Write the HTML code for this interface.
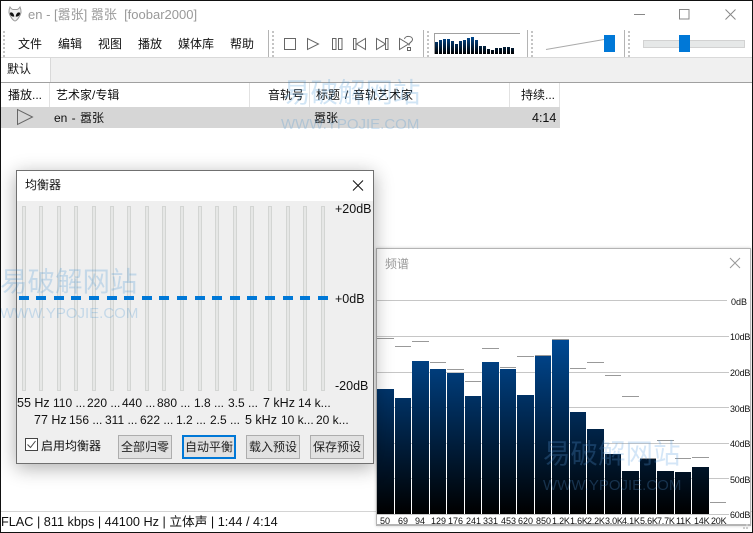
<!DOCTYPE html>
<html><head><meta charset="utf-8">
<style>
html,body{margin:0;padding:0;width:753px;height:533px;overflow:hidden;background:#fff}
body{position:relative;font-family:"Liberation Sans","Noto Sans CJK SC",sans-serif;font-size:12px;color:#111}
.t{position:absolute;white-space:pre;line-height:14px;height:14px}
svg{position:absolute;left:0;top:0;overflow:visible}
.b{position:absolute;box-sizing:border-box;background:#e1e1e1;border:1px solid #adadad;width:54px;height:24px;top:435px;text-align:center;line-height:22px;font-size:12px;color:#222}
.win{position:absolute;left:0;top:0;width:753px;height:533px}
.wm{position:absolute;white-space:pre;color:rgba(40,130,210,.21);line-height:1}
.big{font-size:27.500px}
.www{font-size:15px}
.db{letter-spacing:-.2px}
</style></head><body>

<!-- main window -->
<div class="win" style="z-index:0">
<svg width="753" height="533">
<rect x="1" y="58" width="751" height="25" fill="#f0f0f0"/>
<rect x="1" y="57" width="751" height="1" fill="#d9d9d9"/>
<rect x="1" y="82" width="751" height="1" fill="#a0a0a0"/>
<rect x="1" y="58" width="50" height="24" fill="#fff"/>
<rect x="50" y="58" width="1" height="24" fill="#d9d9d9"/>
<rect x="1" y="107" width="559" height="21" fill="#d6d6d6"/>
<g fill="#e2e2e2"><rect x="49" y="83" width="1" height="24"/><rect x="249" y="83" width="1" height="24"/><rect x="309" y="83" width="1" height="24"/><rect x="509" y="83" width="1" height="24"/><rect x="559" y="83" width="1" height="24"/></g>
<path d="M17.500 109.500V124.500L32.500 117Z" fill="none" stroke="#666"/>
<!-- grippers -->
<g fill="#c4c4c4">
<path d="M3 31h2v2H3zM3 35h2v2H3zM3 39h2v2H3zM3 43h2v2H3zM3 47h2v2H3zM3 51h2v2H3zM3 55h2v2H3z"/>
<path d="M272 31h2v2h-2zM272 35h2v2h-2zM272 39h2v2h-2zM272 43h2v2h-2zM272 47h2v2h-2zM272 51h2v2h-2zM272 55h2v2h-2z"/>
<path d="M427 31h2v2h-2zM427 35h2v2h-2zM427 39h2v2h-2zM427 43h2v2h-2zM427 47h2v2h-2zM427 51h2v2h-2zM427 55h2v2h-2z"/>
<path d="M531 31h2v2h-2zM531 35h2v2h-2zM531 39h2v2h-2zM531 43h2v2h-2zM531 47h2v2h-2zM531 51h2v2h-2zM531 55h2v2h-2z"/>
<path d="M628 31h2v2h-2zM628 35h2v2h-2zM628 39h2v2h-2zM628 43h2v2h-2zM628 47h2v2h-2zM628 51h2v2h-2zM628 55h2v2h-2z"/>
</g>
<g fill="#b4b4b4"><rect x="268" y="30" width="1" height="27"/><rect x="423" y="30" width="1" height="27"/><rect x="527" y="30" width="1" height="27"/><rect x="624" y="30" width="1" height="27"/></g>
<!-- alien icon -->
<path d="M10 7C11 8.500 12 9.500 13 9.500H17C18 9.500 19 8.500 20 7C21.500 10.500 21.500 14 19 17C18 19 16 21 15 21C14 21 12 19 11 17C8.500 14 8.500 10.500 10 7Z" fill="#eee" stroke="#999"/>
<path d="M9.800 13C11.500 11.500 13.800 13 14.300 16.500C12 17 10 15.500 9.800 13ZM20.200 13C18.500 11.500 16.200 13 15.700 16.500C18 17 20 15.500 20.200 13Z" fill="#111"/>
<!-- window controls -->
<rect x="634" y="14" width="11" height="1" fill="#888"/>
<rect x="679.500" y="9.500" width="9.500" height="9.500" fill="none" stroke="#888"/>
<path d="M725.500 9.500L735.500 19.500M735.500 9.500L725.500 19.500" stroke="#888" fill="none"/>
<!-- transport -->
<g fill="none" stroke="#666">
<rect x="284.500" y="38.500" width="11" height="11"/>
<path d="M307.500 38.500V49.500L318.500 44Z"/>
<rect x="332.500" y="38.500" width="3.500" height="11"/><rect x="338.500" y="38.500" width="3.500" height="11"/>
<rect x="353.500" y="38.500" width="2.500" height="11"/><path d="M365.500 38.500V49.500L356.500 44Z"/>
<rect x="385.500" y="38.500" width="2.500" height="11"/><path d="M376.500 38.500V49.500L385.500 44Z"/>
<path d="M399.500 38.500V49.500L408.500 44Z"/>
<path d="M404.500 39C405 35.500 412.500 35.500 412.500 39.500C412.500 42 409 42 409 45.500"/>
<rect x="407.500" y="47.500" width="3" height="3"/>
</g>
<!-- mini visualizer -->
<path d="M434.500 54V33.500H520" fill="none" stroke="#a0a0a0"/>
<defs>
<linearGradient id="mg" gradientUnits="userSpaceOnUse" x1="0" y1="37" x2="0" y2="54"><stop offset="0" stop-color="#00488f"/><stop offset="1" stop-color="#000"/></linearGradient>
</defs>
<g fill="url(#mg)">
<rect x="435" y="42" width="3" height="12"/><rect x="439" y="40" width="3" height="14"/><rect x="443" y="39" width="3" height="15"/><rect x="447" y="39" width="3" height="15"/><rect x="451" y="41" width="3" height="13"/><rect x="455" y="44" width="3" height="10"/><rect x="459" y="41" width="3" height="13"/><rect x="463" y="40" width="3" height="14"/><rect x="467" y="38" width="3" height="16"/><rect x="471" y="37" width="3" height="17"/><rect x="475" y="40" width="3" height="14"/><rect x="479" y="46" width="3" height="8"/><rect x="483" y="46" width="3" height="8"/><rect x="487" y="49" width="3" height="5"/><rect x="491" y="50" width="3" height="4"/><rect x="495" y="48" width="3" height="6"/><rect x="499" y="48" width="3" height="6"/><rect x="503" y="47" width="3" height="7"/><rect x="507" y="47" width="3" height="7"/><rect x="511" y="48" width="3" height="6"/>
</g>
<!-- volume -->
<path d="M546 49.500L604 39.500" stroke="#aaa" fill="none"/>
<rect x="604" y="35" width="11" height="17" fill="#0078d7"/>
<!-- seek -->
<rect x="643.500" y="40.500" width="101" height="7" fill="#e6e8e8" stroke="#d2d2d2"/>
<rect x="679" y="35" width="11" height="17" fill="#0078d7"/>
<!-- status -->
<rect x="1" y="511" width="751" height="1" fill="#d4d4d4"/>
</svg>
<div class="t" style="left:28px;top:8px;font-size:13px;color:#999">en - [嚣张] 嚣张  [foobar2000]</div>
<div class="t" style="left:18px;top:37px">文件</div>
<div class="t" style="left:58px;top:37px">编辑</div>
<div class="t" style="left:98px;top:37px">视图</div>
<div class="t" style="left:138px;top:37px">播放</div>
<div class="t" style="left:178px;top:37px">媒体库</div>
<div class="t" style="left:230px;top:37px">帮助</div>
<div class="t" style="left:7px;top:62px">默认</div>
<div class="t" style="left:8px;top:88px">播放...</div>
<div class="t" style="left:56px;top:88px">艺术家/专辑</div>
<div class="t" style="left:268px;top:88px">音轨号</div>
<div class="t" style="left:316px;top:88px;word-spacing:1.500px">标题 / 音轨艺术家</div>
<div class="t" style="left:521px;top:88px">持续...</div>
<div class="t" style="left:54px;top:111px;word-spacing:1px">en - 嚣张</div>
<div class="t" style="left:314px;top:111px">嚣张</div>
<div class="t" style="left:532px;top:111px;font-size:12.500px">4:14</div>
<div class="t" style="left:1px;top:515px;font-size:12.700px">FLAC | 811 kbps | 44100 Hz | 立体声 | 1:44 / 4:14</div>
<div class="wm big" style="left:283px;top:79px">易破解网站</div>
<div class="wm www" style="left:281px;top:117px">WWW.YPOJIE.COM</div>
</div>

<!-- spectrum window -->
<div style="position:absolute;z-index:1;left:376px;top:248px;width:375px;height:278px;background:#fff;box-sizing:border-box;border:1px solid #b4b4b4;border-width:1px 1px 2px 1px;box-shadow:0 0 3px rgba(0,0,0,.2)"></div>
<div class="win" style="z-index:1">
<svg width="753" height="533">
<defs><linearGradient id="sg" gradientUnits="userSpaceOnUse" x1="0" y1="338" x2="0" y2="514"><stop offset="0" stop-color="#004a96"/><stop offset="1" stop-color="#000"/></linearGradient></defs>
<g fill="#c6c6c6">
<rect x="377" y="300" width="350" height="1"/><rect x="377" y="336" width="352" height="1"/><rect x="377" y="372" width="352" height="1"/><rect x="377" y="407" width="352" height="1"/><rect x="377" y="443" width="352" height="1"/><rect x="377" y="478" width="352" height="1"/><rect x="377" y="514" width="352" height="1"/>
</g>
<g fill="url(#sg)">
<rect x="377" y="389" width="17" height="125"/><rect x="395" y="398" width="16" height="116"/><rect x="412" y="361" width="17" height="153"/><rect x="430" y="369" width="16" height="145"/><rect x="447" y="373" width="17" height="141"/><rect x="465" y="396" width="16" height="118"/><rect x="482" y="362" width="17" height="152"/><rect x="500" y="369" width="16" height="145"/><rect x="517" y="395" width="17" height="119"/><rect x="535" y="356" width="16" height="158"/><rect x="552" y="340" width="17" height="174"/><rect x="570" y="412" width="16" height="102"/><rect x="587" y="429" width="17" height="85"/><rect x="605" y="454" width="16" height="60"/><rect x="622" y="471" width="17" height="43"/><rect x="640" y="459" width="16" height="55"/><rect x="657" y="471" width="17" height="43"/><rect x="675" y="472" width="16" height="42"/><rect x="692" y="467" width="17" height="47"/>
</g>
<g fill="#999">
<rect x="377" y="338" width="17" height="1"/><rect x="395" y="346" width="16" height="1"/><rect x="412" y="341" width="17" height="1"/><rect x="430" y="362" width="16" height="1"/><rect x="447" y="369" width="17" height="1"/><rect x="465" y="381" width="16" height="1"/><rect x="482" y="348" width="17" height="1"/><rect x="500" y="367" width="16" height="1"/><rect x="517" y="356" width="17" height="1"/><rect x="535" y="355" width="16" height="1"/><rect x="552" y="339" width="17" height="1"/><rect x="570" y="368" width="16" height="1"/><rect x="587" y="362" width="17" height="1"/><rect x="605" y="375" width="16" height="1"/><rect x="622" y="396" width="17" height="1"/><rect x="640" y="458" width="16" height="1"/><rect x="657" y="440" width="17" height="1"/><rect x="675" y="458" width="16" height="1"/><rect x="692" y="457" width="17" height="1"/><rect x="710" y="502" width="16" height="1"/>
</g>
<path d="M730 258L740 268M740 258L730 268" stroke="#999" fill="none"/>
<path d="M746 527h2v2h-2zM743 527h2v2h-2zM746 524h2v2h-2z" fill="#ccc"/>
</svg>
<div class="t" style="left:385px;top:257px;color:#999">频谱</div>
<div style="font-size:9px">
<div class="t" style="left:731px;top:295px">0dB</div>
<div class="t db" style="left:730px;top:330px">10dB</div>
<div class="t db" style="left:730px;top:366px">20dB</div>
<div class="t db" style="left:730px;top:402px">30dB</div>
<div class="t db" style="left:730px;top:437px">40dB</div>
<div class="t db" style="left:730px;top:473px">50dB</div>
<div class="t db" style="left:730px;top:508px">60dB</div>
<div class="t" style="left:380px;top:514px">50</div>
<div class="t" style="left:398px;top:514px">69</div>
<div class="t" style="left:415px;top:514px">94</div>
<div class="t" style="left:431px;top:514px">129</div>
<div class="t" style="left:448px;top:514px">176</div>
<div class="t" style="left:466px;top:514px">241</div>
<div class="t" style="left:483px;top:514px">331</div>
<div class="t" style="left:501px;top:514px">453</div>
<div class="t" style="left:518px;top:514px">620</div>
<div class="t" style="left:536px;top:514px">850</div>
<div class="t db" style="left:552px;top:514px">1.2K</div>
<div class="t db" style="left:570px;top:514px">1.6K</div>
<div class="t db" style="left:587px;top:514px">2.2K</div>
<div class="t db" style="left:605px;top:514px">3.0K</div>
<div class="t db" style="left:622px;top:514px">4.1K</div>
<div class="t db" style="left:640px;top:514px">5.6K</div>
<div class="t db" style="left:657px;top:514px">7.7K</div>
<div class="t db" style="left:676px;top:514px">11K</div>
<div class="t db" style="left:694px;top:514px">14K</div>
<div class="t db" style="left:711px;top:514px">20K</div>
</div>
<div class="wm big" style="left:543px;top:440px;color:rgba(90,160,225,.26)">易破解网站</div>
<div class="wm www" style="left:543px;top:478px;color:rgba(90,160,225,.26)">WWW.YPOJIE.COM</div>
</div>

<!-- EQ window -->
<div style="position:absolute;z-index:2;left:16px;top:170px;width:358px;height:294px;box-sizing:border-box;border:1px solid #707070;background:#efefef;box-shadow:0 4px 18px rgba(0,0,0,.32)"></div>
<div class="win" style="z-index:2">
<svg width="753" height="533">
<rect x="17" y="171" width="356" height="30" fill="#fff"/>
<path d="M353 180.500L363 190.500M363 180.500L353 190.500" stroke="#111" fill="none"/>
<g fill="#e6e7e6" stroke="#d3d5d3">
<rect x="22.500" y="206.500" width="3" height="184"/><rect x="39.500" y="206.500" width="3" height="184"/><rect x="57.500" y="206.500" width="3" height="184"/><rect x="74.500" y="206.500" width="3" height="184"/><rect x="92.500" y="206.500" width="3" height="184"/><rect x="110.500" y="206.500" width="3" height="184"/><rect x="127.500" y="206.500" width="3" height="184"/><rect x="145.500" y="206.500" width="3" height="184"/><rect x="162.500" y="206.500" width="3" height="184"/><rect x="180.500" y="206.500" width="3" height="184"/><rect x="198.500" y="206.500" width="3" height="184"/><rect x="215.500" y="206.500" width="3" height="184"/><rect x="233.500" y="206.500" width="3" height="184"/><rect x="250.500" y="206.500" width="3" height="184"/><rect x="268.500" y="206.500" width="3" height="184"/><rect x="286.500" y="206.500" width="3" height="184"/><rect x="303.500" y="206.500" width="3" height="184"/><rect x="321.500" y="206.500" width="3" height="184"/>
</g>
<g fill="#0078d7">
<rect x="19" y="296" width="10" height="4"/><rect x="36" y="296" width="10" height="4"/><rect x="54" y="296" width="10" height="4"/><rect x="71" y="296" width="10" height="4"/><rect x="89" y="296" width="10" height="4"/><rect x="107" y="296" width="10" height="4"/><rect x="124" y="296" width="10" height="4"/><rect x="142" y="296" width="10" height="4"/><rect x="159" y="296" width="10" height="4"/><rect x="177" y="296" width="10" height="4"/><rect x="195" y="296" width="10" height="4"/><rect x="212" y="296" width="10" height="4"/><rect x="230" y="296" width="10" height="4"/><rect x="247" y="296" width="10" height="4"/><rect x="265" y="296" width="10" height="4"/><rect x="283" y="296" width="10" height="4"/><rect x="300" y="296" width="10" height="4"/><rect x="318" y="296" width="10" height="4"/>
</g>
<rect x="25.500" y="438.500" width="12" height="12" fill="#fff" stroke="#444"/>
<path d="M27.500 444.500L30.500 447.500L35.500 441" stroke="#444" fill="none"/>
</svg>
<div class="t" style="left:25px;top:178px">均衡器</div>
<div class="t" style="left:335px;top:202px;font-size:12.500px">+20dB</div>
<div class="t" style="left:335px;top:292px;font-size:12.500px">+0dB</div>
<div class="t" style="left:335px;top:379px;font-size:12.500px">-20dB</div>
<div class="t" style="left:17px;top:396px;font-size:12.500px">55 Hz</div>
<div class="t" style="left:53px;top:396px">110 ...</div>
<div class="t" style="left:87px;top:396px">220 ...</div>
<div class="t" style="left:122px;top:396px">440 ...</div>
<div class="t" style="left:157px;top:396px">880 ...</div>
<div class="t" style="left:194px;top:396px">1.8 ...</div>
<div class="t" style="left:228px;top:396px">3.5 ...</div>
<div class="t" style="left:263px;top:396px;font-size:12.500px">7 kHz</div>
<div class="t" style="left:298px;top:396px">14 k...</div>
<div class="t" style="left:34px;top:413px;font-size:12.500px">77 Hz</div>
<div class="t" style="left:69px;top:413px">156 ...</div>
<div class="t" style="left:105px;top:413px">311 ...</div>
<div class="t" style="left:140px;top:413px">622 ...</div>
<div class="t" style="left:176px;top:413px">1.2 ...</div>
<div class="t" style="left:210px;top:413px">2.5 ...</div>
<div class="t" style="left:245px;top:413px;font-size:12.500px">5 kHz</div>
<div class="t" style="left:281px;top:413px">10 k...</div>
<div class="t" style="left:316px;top:413px">20 k...</div>
<div class="t" style="left:41px;top:439px">启用均衡器</div>
<div class="b" style="left:118px">全部归零</div>
<div class="b" style="left:182px;border:2px solid #0078d7;line-height:20px">自动平衡</div>
<div class="b" style="left:246px">载入预设</div>
<div class="b" style="left:310px">保存预设</div>
<div class="wm big" style="left:0;top:268px">易破解网站</div>
<div class="wm www" style="left:0;top:306px">WWW.YPOJIE.COM</div>
</div>

<!-- outer frame -->
<div style="position:absolute;z-index:3;left:0;top:0;width:753px;height:533px;box-sizing:border-box;border:1px solid #111;pointer-events:none"></div>
</body></html>
